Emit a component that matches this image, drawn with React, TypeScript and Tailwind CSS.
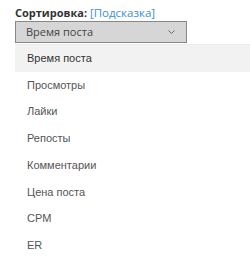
import React, { useState } from 'react';

const options = [
  'Время поста',
  'Просмотры',
  'Лайки',
  'Репосты',
  'Комментарии',
  'Цена поста',
  'CPM',
  'ER',
];

export default function App() {
  const [selected, setSelected] = useState(0);
  const [hovered, setHovered] = useState(0);

  return (
    <div className="w-[250px] h-[259px] overflow-hidden bg-white pl-[15px] pt-[4px] font-['Open_Sans',sans-serif]">
      <div className="text-[11px] leading-[17px] text-[#333]">
        <span className="font-bold">Сортировка:</span>{' '}
        <a className="text-[11.5px] text-[#3a8fd9] cursor-pointer">[Подсказка]</a>
      </div>

      <div className="flex h-[22px] w-[172px] items-center justify-between border border-[#888] bg-[#d6d6d6] pl-[10px] pr-[11px] text-[11px] text-[#444]">
        <span>{options[selected]}</span>
        <svg width="7" height="4" viewBox="0 0 7 4" fill="none">
          <path d="M0.5 0.5l3 3 3-3" stroke="#666" strokeWidth="1" />
        </svg>
      </div>

      <ul className="mt-[1px] w-[250px] border-t border-[#ededed] bg-white font-['Liberation_Sans',Arial,sans-serif] text-[11px] text-[#555]">
        {options.map((opt, i) => (
          <li
            key={opt}
            onMouseEnter={() => setHovered(i)}
            onClick={() => setSelected(i)}
            className={`flex h-[26.7px] cursor-pointer items-center pl-[12px] ${
              hovered === i ? 'bg-[#f2f2f2] text-[#333]' : ''
            }`}
          >
            {opt}
          </li>
        ))}
      </ul>
    </div>
  );
}
